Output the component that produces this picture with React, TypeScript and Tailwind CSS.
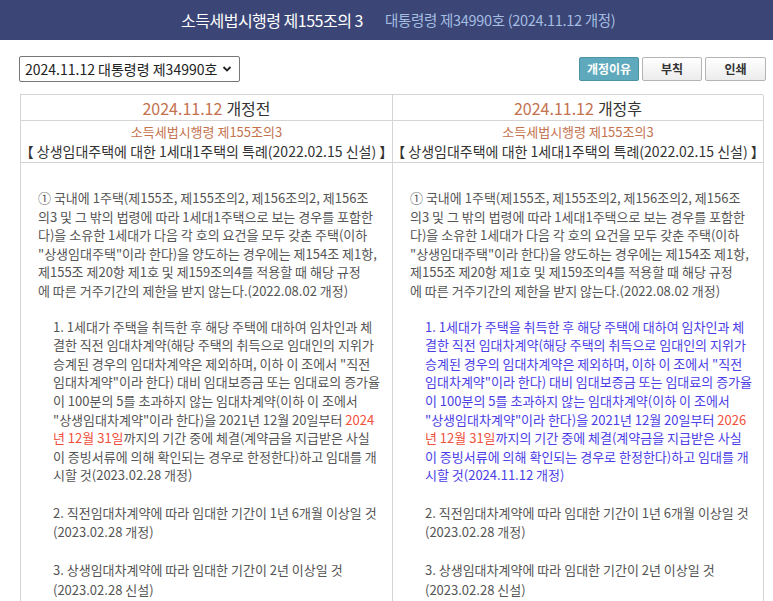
import React from "react";

const F = { fontFamily: '"Noto Sans CJK KR", "Noto Sans", sans-serif' };

function Col({ after }: { after?: boolean }) {
  const c1 = after ? "text-[#4b3ee6]" : "text-[#555]";
  const red = "text-[#f0503c]";
  return (
    <div className="pt-[26px] pl-[17px] pr-[10px] text-[13px] leading-[18.6px] text-[#555] whitespace-nowrap">
      <p>
        ① 국내에 1주택(제155조, 제155조의2, 제156조의2, 제156조<br />
        의3 및 그 밖의 법령에 따라 1세대1주택으로 보는 경우를 포함한<br />
        다)을 소유한 1세대가 다음 각 호의 요건을 모두 갖춘 주택(이하<br />
        "상생임대주택"이라 한다)을 양도하는 경우에는 제154조 제1항,<br />
        제155조 제20항 제1호 및 제159조의4를 적용할 때 해당 규정<br />
        에 따른 거주기간의 제한을 받지 않는다.(2022.08.02 개정)
      </p>
      <p className={`mt-[17px] pl-[15px] ${c1}`}>
        1. 1세대가 주택을 취득한 후 해당 주택에 대하여 임차인과 체<br />
        결한 직전 임대차계약(해당 주택의 취득으로 임대인의 지위가<br />
        승계된 경우의 임대차계약은 제외하며, 이하 이 조에서 "직전<br />
        임대차계약"이라 한다) 대비 임대보증금 또는 임대료의 증가율<br />
        이 100분의 5를 초과하지 않는 임대차계약(이하 이 조에서<br />
        "상생임대차계약"이라 한다)을 2021년 12월 20일부터 <span className={red}>{after ? "2026" : "2024"}</span>
        <br />
        <span className={red}>년 12월 31일</span>까지의 기간 중에 체결(계약금을 지급받은 사실<br />
        이 증빙서류에 의해 확인되는 경우로 한정한다)하고 임대를 개<br />
        시할 것({after ? "2024.11.12" : "2023.02.28"} 개정)
      </p>
      <p className="mt-[19px] pl-[15px]">
        2. 직전임대차계약에 따라 임대한 기간이 1년 6개월 이상일 것<br />
        (2023.02.28 개정)
      </p>
      <p className="mt-[19px] pl-[15px] leading-[20px]">
        3. 상생임대차계약에 따라 임대한 기간이 2년 이상일 것<br />
        (2023.02.28 신설)
      </p>
    </div>
  );
}

export default function App() {
  return (
    <div style={F} className="w-[773px] h-[601px] overflow-hidden bg-white">
      <div className="h-[40px] bg-[#3b4677] flex items-center pl-[181px]">
        <span className="text-white text-[16px] tracking-[-0.5px]">소득세법시행령 제155조의 3</span>
        <span className="ml-[22px] text-[#a4bde0] text-[14.5px] tracking-[-0.3px]">
          대통령령 제34990호 (2024.11.12 개정)
        </span>
      </div>
      <div className="flex items-center pl-[19px] pr-[7px] pt-[16px] pb-[12px]">
        <div className="h-[26px] w-[221px] border border-[#767676] rounded-[2px] flex items-center pl-[5px] text-[14px] text-[#222]">
          <span>2024.11.12 대통령령 제34990호</span>
          <svg className="ml-[5px]" width="10" height="8" viewBox="0 0 10 8">
            <path d="M1.5 2 L5 5.5 L8.5 2" stroke="#222" strokeWidth="1.8" fill="none" />
          </svg>
        </div>
        <div className="ml-auto flex gap-[3px]">
          <div className="w-[60px] h-[24px] bg-[#5ea9bc] border border-[#4b94a6] rounded-[2px] flex items-center justify-center text-white text-[12px] font-bold">
            개정이유
          </div>
          <div className="w-[60px] h-[24px] bg-gradient-to-b from-white to-[#ececec] border border-[#b4b4b4] rounded-[2px] flex items-center justify-center text-[#333] text-[12px] font-bold">
            부칙
          </div>
          <div className="w-[61px] h-[24px] bg-gradient-to-b from-white to-[#ececec] border border-[#b4b4b4] rounded-[2px] flex items-center justify-center text-[#333] text-[12px] font-bold">
            인쇄
          </div>
        </div>
      </div>
      <div className="ml-[20px] w-[743px] border-l border-t border-[#d4d4d4]">
        <div className="grid grid-cols-[372px_371px]">
          <div className="h-[26px] border-r border-b border-[#d4d4d4] flex items-center justify-center text-[16px]">
            <span className="text-[#c4724e]">2024.11.12</span>
            <span className="ml-[4px] text-[#333]">개정전</span>
          </div>
          <div className="h-[26px] border-r border-b border-[#d4d4d4] flex items-center justify-center text-[16px]">
            <span className="text-[#c4724e]">2024.11.12</span>
            <span className="ml-[4px] text-[#333]">개정후</span>
          </div>
          {[0, 1].map((i) => (
            <div key={i} className="h-[42px] border-r border-b border-[#d4d4d4] flex flex-col items-center justify-center gap-[1px] whitespace-nowrap">
              <span className="text-[#c4724e] text-[13px] leading-[18px]">소득세법시행령 제155조의3</span>
              <span className="text-[#333] text-[14px] leading-[18px]">【 상생임대주택에 대한 1세대1주택의 특례(2022.02.15 신설) 】</span>
            </div>
          ))}
          <div className="border-r border-[#d4d4d4] h-[500px]">
            <Col />
          </div>
          <div className="border-r border-[#d4d4d4] h-[500px]">
            <Col after />
          </div>
        </div>
      </div>
    </div>
  );
}
